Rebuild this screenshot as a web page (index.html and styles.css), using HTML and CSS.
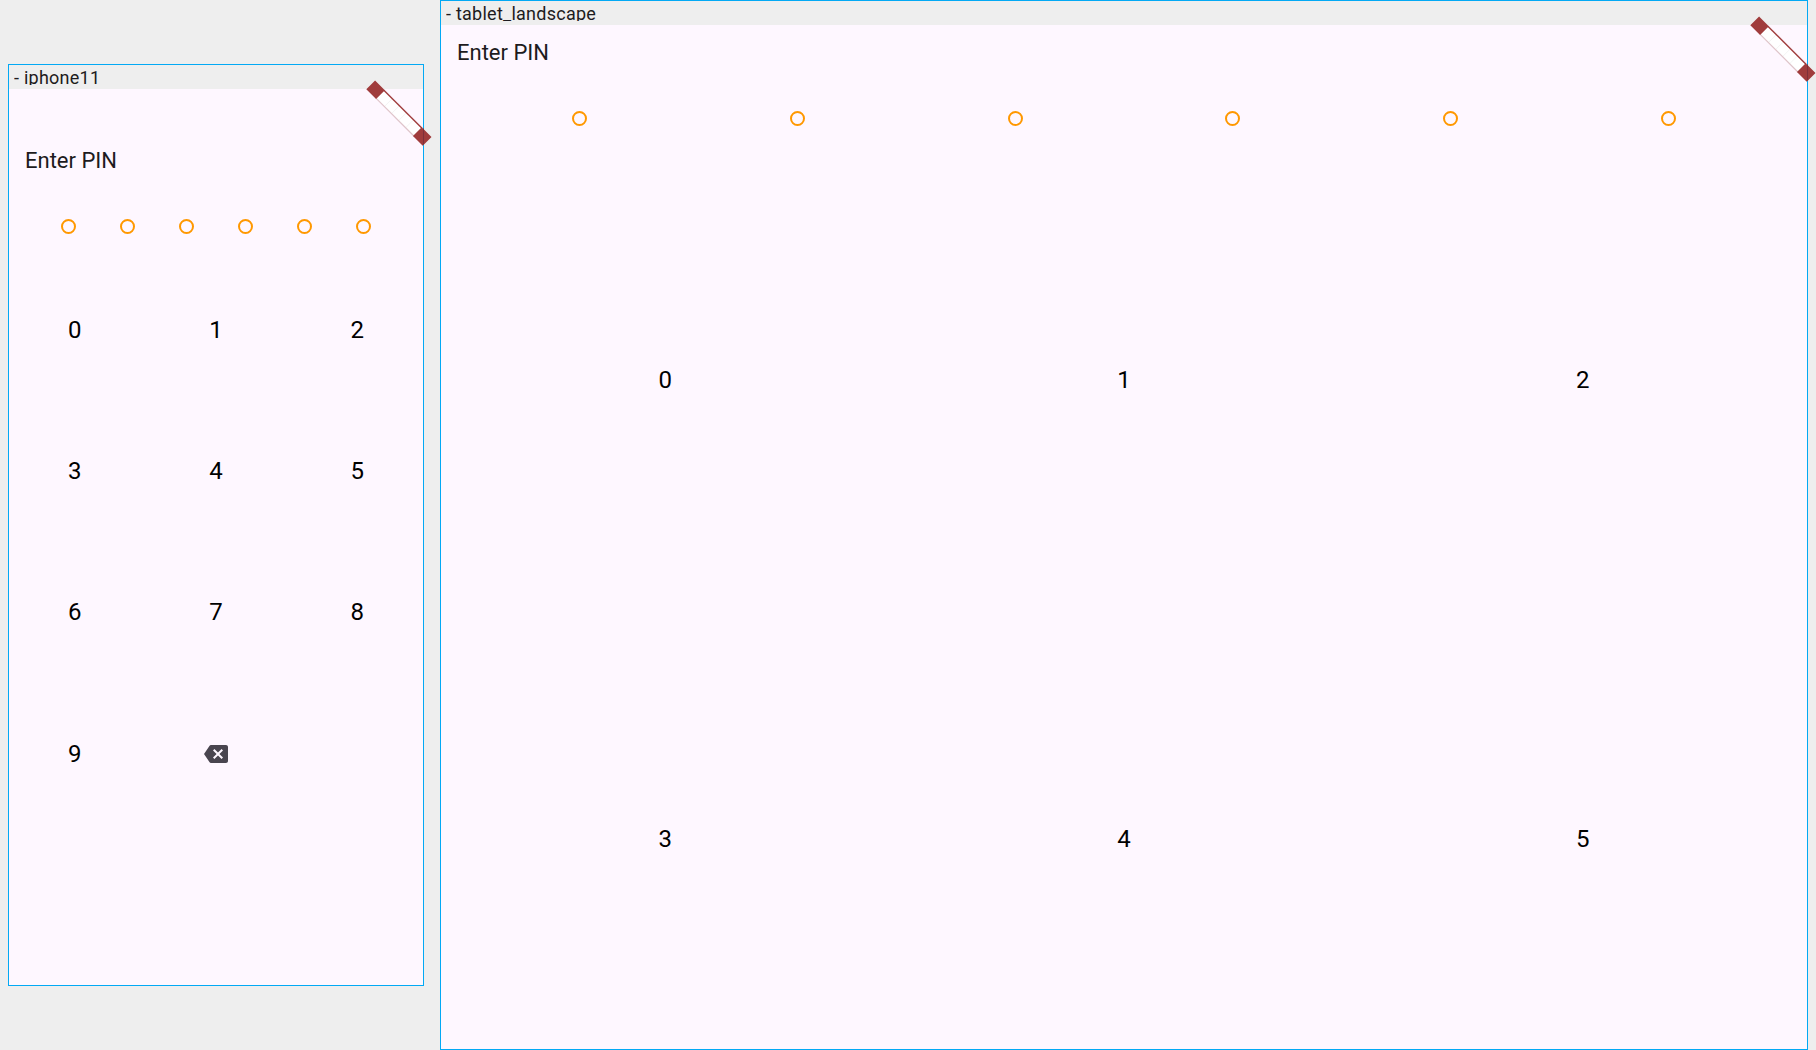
FILE: index.html
```html
<!DOCTYPE html>
<html lang="en">
<head>
<meta charset="utf-8">
<title>Enter PIN</title>
<link rel="stylesheet" href="styles.css">
</head>
<body>
<main class="board">
  <section class="device phone">
    <header class="device-name"><span>- iphone11</span></header>
    <div class="screen">
      <h1 class="title">Enter PIN</h1>
      <div class="dots"><i></i><i></i><i></i><i></i><i></i><i></i></div>
      <div class="keypad">
        <b>0</b><b>1</b><b>2</b><b>3</b><b>4</b><b>5</b><b>6</b><b>7</b><b>8</b><b>9</b>
        <b><svg class="backspace" viewBox="0 0 24 24"><path d="M22 3H7c-.69 0-1.23.35-1.59.88L0 12l5.41 8.11c.36.53.9.89 1.59.89h15c1.1 0 2-.9 2-2V5c0-1.1-.9-2-2-2zm-3 12.59L17.59 17 14 13.41 10.41 17 9 15.59 12.59 12 9 8.41 10.41 7 14 10.59 17.59 7 19 8.41 15.41 12 19 15.59z"/></svg></b>
      </div>
    </div>
    <svg class="banner" viewBox="0 0 66 66"><g transform="translate(4.7 5.9) rotate(45)"><path class="strip" d="M13 -6H67V6H13z"/><path class="seam" d="M25 -6V6M35 -6V6M45 -6V6M55 -6V6"/><path class="edge" d="M13 -5.6H67"/><path class="faint" d="M13 5.6H67"/><path class="block" d="M0 -6.2H13.8V6.2H0zM66 -6.2H79.8V6.2H66z"/></g><path class="fold" d="M57.5 49.5V65.5"/></svg>
  </section>
  <section class="device tablet">
    <header class="device-name"><span>- tablet_landscape</span></header>
    <div class="screen">
      <h1 class="title">Enter PIN</h1>
      <div class="dots"><i></i><i></i><i></i><i></i><i></i><i></i></div>
      <div class="keypad"><b>0</b><b>1</b><b>2</b><b>3</b><b>4</b><b>5</b></div>
    </div>
    <svg class="banner" viewBox="0 0 66 66"><g transform="translate(4.7 5.9) rotate(45)"><path class="strip" d="M13 -6H67V6H13z"/><path class="seam" d="M25 -6V6M35 -6V6M45 -6V6M55 -6V6"/><path class="edge" d="M13 -5.6H67"/><path class="faint" d="M13 5.6H67"/><path class="block" d="M0 -6.2H13.8V6.2H0zM66 -6.2H79.8V6.2H66z"/></g><path class="fold" d="M57.5 49.5V65.5"/></svg>
  </section>
</main>
</body>
</html>
```
FILE: styles.css
```css
* { box-sizing: border-box; }
body { margin: 0; background: #eee; font-family: Roboto, sans-serif; }
.board { display: flex; align-items: center; gap: 16px; width: 1816px; height: 1050px; padding-left: 8px; overflow: hidden; }
.device { position: relative; flex: none; display: flex; flex-direction: column; border: 1px solid #03a9f4; }
.phone { width: 416px; height: 922px; }
.tablet { width: 1368px; height: 1050px; }
.device-name { flex: none; height: 24px; padding: 2px 4px 0 5px; color: #1d1b20; font-size: 18px; line-height: 21px; letter-spacing: 0.25px; }
.device-name span { display: block; height: 18px; overflow: hidden; }
.screen { flex: 1; min-height: 0; overflow: hidden; background: #fef7ff; }
.phone .screen { padding-top: 44px; }
.title { margin: 0; padding: 14px 16px 0; height: 56px; color: #1d1b20; font-size: 22px; font-weight: 400; line-height: 28px; }
.dots { display: flex; justify-content: space-around; align-items: center; height: 75px; padding: 0 30px; }
.dots i { width: 15px; height: 15px; border: 2px solid #ff9800; border-radius: 50%; }
.keypad { display: grid; grid-template-columns: repeat(3, 1fr); gap: 10px; }
.keypad b { display: flex; align-items: center; justify-content: center; aspect-ratio: 1; color: #000; font-size: 24px; font-weight: 400; line-height: 32px; }
.backspace { width: 24px; height: 24px; fill: #49454f; }
.banner { position: absolute; top: 14px; right: -9px; width: 66px; height: 66px; overflow: visible; }
.strip { fill: #fff; }
.seam { fill: none; stroke: #eee; stroke-width: 0.6; }
.edge { fill: none; stroke: #a03c3c; stroke-width: 1.4; }
.faint { fill: none; stroke: #dfc4ca; stroke-width: 1.2; }
.block { fill: #a03c3c; }
.fold { fill: none; stroke: #7d303a; stroke-width: 1; }
```
